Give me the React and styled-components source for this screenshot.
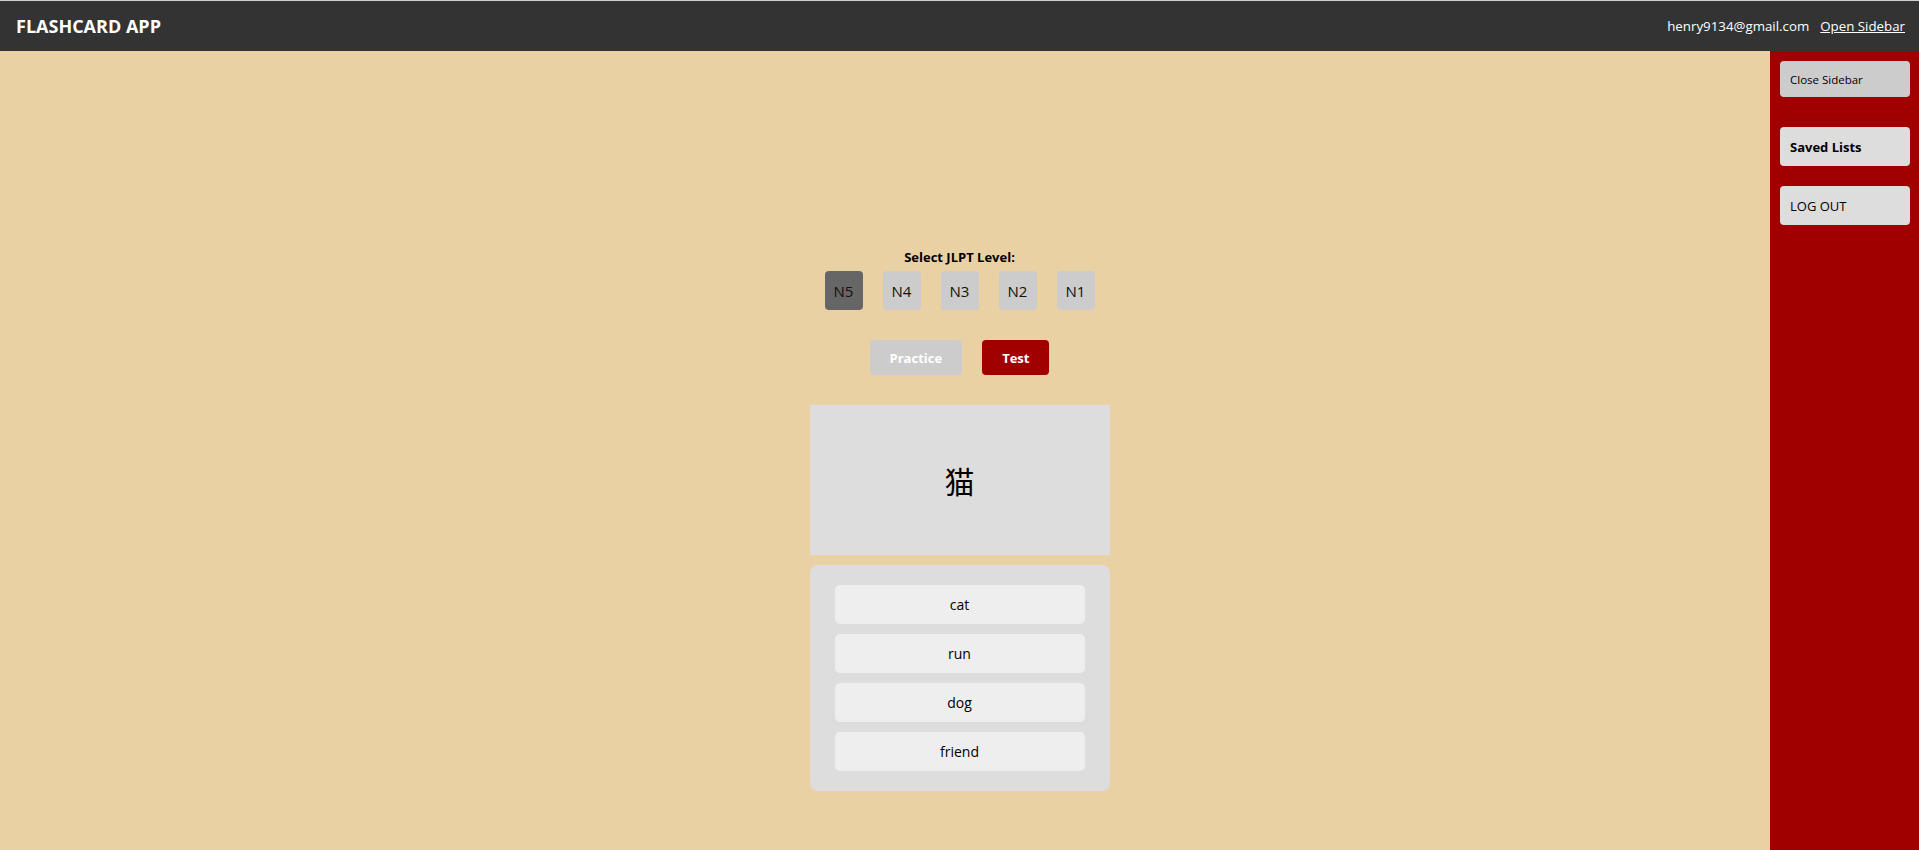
import React, { useState } from "react";
import styled, { createGlobalStyle } from "styled-components";

const GlobalStyle = createGlobalStyle`
    html, body {
        margin: 0;
        padding: 0;
        background: #e9d1a4;
        font-family: "Open Sans", "Noto Sans", "Noto Sans CJK JP", sans-serif;
    }
    * {
        box-sizing: border-box;
    }
`;

const levels = ["N5", "N4", "N3", "N2", "N1"];
const choices = ["cat", "run", "dog", "friend"];

const App = () => {
    const [level, setLevel] = useState("N5");
    const [mode, setMode] = useState("test");

    return (
        <>
            <GlobalStyle />
            <Page>
                <Header>
                    <Title>FLASHCARD APP</Title>
                    <UserBox>
                        <Email>henry9134@gmail.com</Email>
                        <SidebarLink href="#">Open Sidebar</SidebarLink>
                    </UserBox>
                </Header>

                <Main>
                    <LevelLabel>Select JLPT Level:</LevelLabel>
                    <LevelRow>
                        {levels.map(l => (
                            <LevelButton key={l} $active={l === level} onClick={() => setLevel(l)}>
                                {l}
                            </LevelButton>
                        ))}
                    </LevelRow>

                    <ModeRow>
                        <ModeButton $active={mode === "practice"} onClick={() => setMode("practice")}>
                            Practice
                        </ModeButton>
                        <ModeButton $active={mode === "test"} onClick={() => setMode("test")}>
                            Test
                        </ModeButton>
                    </ModeRow>

                    <Card>
                        <Kanji>猫</Kanji>
                    </Card>

                    <Choices>
                        {choices.map(c => (
                            <Choice key={c}>{c}</Choice>
                        ))}
                    </Choices>
                </Main>

                <Sidebar>
                    <CloseButton>Close Sidebar</CloseButton>
                    <SideButton $bold>Saved Lists</SideButton>
                    <SideButton>LOG OUT</SideButton>
                </Sidebar>
            </Page>
        </>
    );
}

export default App;


const Page = styled.div`
    min-height: 850px;
    border-top: 1px solid #cfcfcf;
`

const Header = styled.header`
    height: 50px;
    background: #333;
    color: #fff;
    display: flex;
    align-items: center;
    justify-content: space-between;
    padding: 0 14px 0 16px;
`

const Title = styled.h1`
    margin: 0;
    font-size: 18px;
    font-weight: 700;
`

const UserBox = styled.div`
    display: flex;
    align-items: center;
    gap: 11px;
    font-size: 13.3px;
`

const Email = styled.span`
    color: #fff;
`

const SidebarLink = styled.a`
    color: #fff;
    text-decoration: underline;
`

const Main = styled.main`
    display: flex;
    flex-direction: column;
    align-items: center;
    padding-top: 197px;
`

const LevelLabel = styled.p`
    margin: 0 0 5px;
    font-size: 13px;
    font-weight: 700;
    line-height: 18px;
    color: #000;
`

const LevelRow = styled.div`
    display: flex;
    gap: 20px;
`

const LevelButton = styled.button`
    width: 38px;
    height: 39px;
    padding: 0;
    border: none;
    border-radius: 4px;
    background: ${p => p.$active ? "#666" : "#ccc"};
    color: #111;
    font-family: inherit;
    font-size: 15px;
    cursor: pointer;
`

const ModeRow = styled.div`
    display: flex;
    gap: 20px;
    margin-top: 30px;
`

const ModeButton = styled.button`
    height: 35px;
    padding: 0 20px;
    border: none;
    border-radius: 4px;
    background: ${p => p.$active ? "#a00000" : "#ccc"};
    color: #fff;
    font-family: inherit;
    font-size: 13px;
    font-weight: 700;
    cursor: pointer;
`

const Card = styled.div`
    width: 300px;
    height: 150px;
    margin-top: 30px;
    background: #ddd;
    display: flex;
    align-items: center;
    justify-content: center;
`

const Kanji = styled.span`
    font-family: "Noto Sans CJK JP", sans-serif;
    font-size: 30px;
    color: #000;
`

const Choices = styled.div`
    width: 300px;
    margin-top: 10px;
    padding: 20px 25px;
    background: #ddd;
    border-radius: 8px;
    display: flex;
    flex-direction: column;
    gap: 10px;
`

const Choice = styled.button`
    height: 39px;
    border: none;
    border-radius: 5px;
    background: #eee;
    color: #000;
    font-family: inherit;
    font-size: 14px;
    cursor: pointer;
`

const Sidebar = styled.aside`
    position: fixed;
    top: 51px;
    right: 0;
    bottom: 0;
    width: 149px;
    padding: 10px 9px 10px 10px;
    background: #a00000;
    display: flex;
    flex-direction: column;
    gap: 20px;
`

const SideButton = styled.button`
    height: 39px;
    padding: 0 0 0 10px;
    border: none;
    border-radius: 4px;
    background: #ddd;
    color: #000;
    text-align: left;
    font-family: inherit;
    font-size: 13px;
    font-weight: ${p => p.$bold ? 700 : 400};
    cursor: pointer;
`

const CloseButton = styled(SideButton)`
    height: 36px;
    margin-bottom: 10px;
    background: #ccc;
    font-size: 11.5px;
`
